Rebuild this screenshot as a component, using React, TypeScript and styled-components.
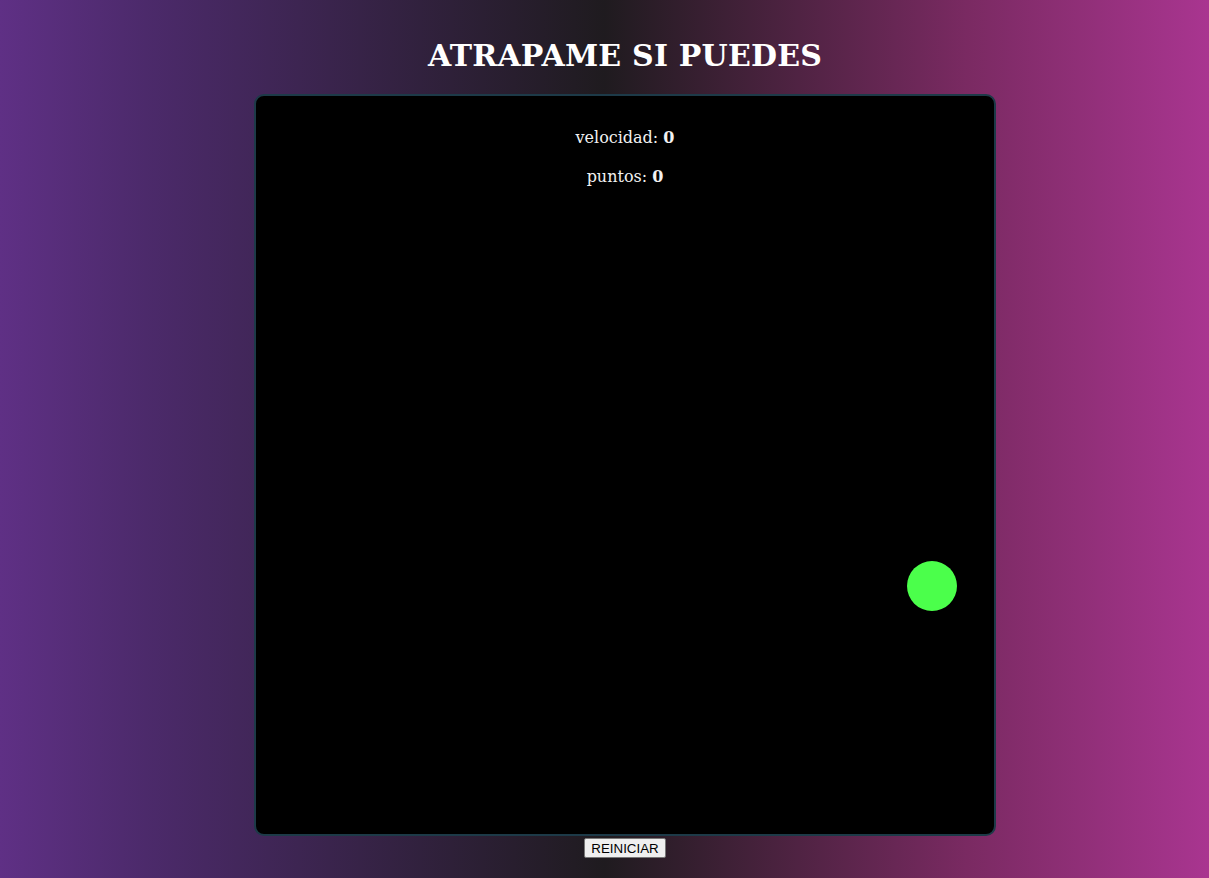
import React from "react";
import styled, { createGlobalStyle } from "styled-components";

const Global = createGlobalStyle`
  html, body { margin: 0; padding: 0; }
  body {
    min-height: 878px;
    background: linear-gradient(to right, #5f3085 0%, #4c2a6b 12%, #1f1b1f 50%, #7a2a62 80%, #a93590 100%);
    font-family: "DejaVu Serif", "Liberation Serif", serif;
    color: #ffffff;
  }
`;

const Page = styled.main`
  display: flex;
  flex-direction: column;
  align-items: center;
  padding-top: 38px;
  padding-left: 41px;
`;

const Title = styled.h1`
  margin: 0 0 20px;
  font-family: "DejaVu Serif", serif;
  font-size: 30px;
  font-weight: bold;
  line-height: 36px;
  letter-spacing: 0.2px;
  color: #ffffff;
`;

const Board = styled.div`
  position: relative;
  box-sizing: border-box;
  width: 742px;
  height: 742px;
  background: #000000;
  border: 2px solid #1d3a48;
  border-radius: 10px;
  display: flex;
  flex-direction: column;
  align-items: center;
  padding-top: 32px;
`;

const Stat = styled.p`
  margin: 0 0 19px;
  font-family: "DejaVu Serif", serif;
  font-size: 16px;
  line-height: 20px;
  color: #f2f2f2;
  b { font-weight: bold; }
`;

const Ball = styled.div`
  position: absolute;
  width: 50px;
  height: 50px;
  border-radius: 50%;
  background: #4bff4b;
`;

const Button = styled.button`
  margin-top: 2px;
  font-family: "Liberation Sans", Arial, sans-serif;
  font-size: 13.33px;
  padding: 1px 6px;
  height: 20px;
  background: #efefef;
  color: #000;
  border: 1px solid #767676;
  border-radius: 2px;
`;

export default function App() {
  return (
    <>
      <Global />
      <Page>
        <Title>ATRAPAME SI PUEDES</Title>
        <Board>
          <Stat>velocidad: <b>0</b></Stat>
          <Stat>puntos: <b>0</b></Stat>
          <Ball style={{ left: 651, top: 465 }} />
        </Board>
        <Button>REINICIAR</Button>
      </Page>
    </>
  );
}
